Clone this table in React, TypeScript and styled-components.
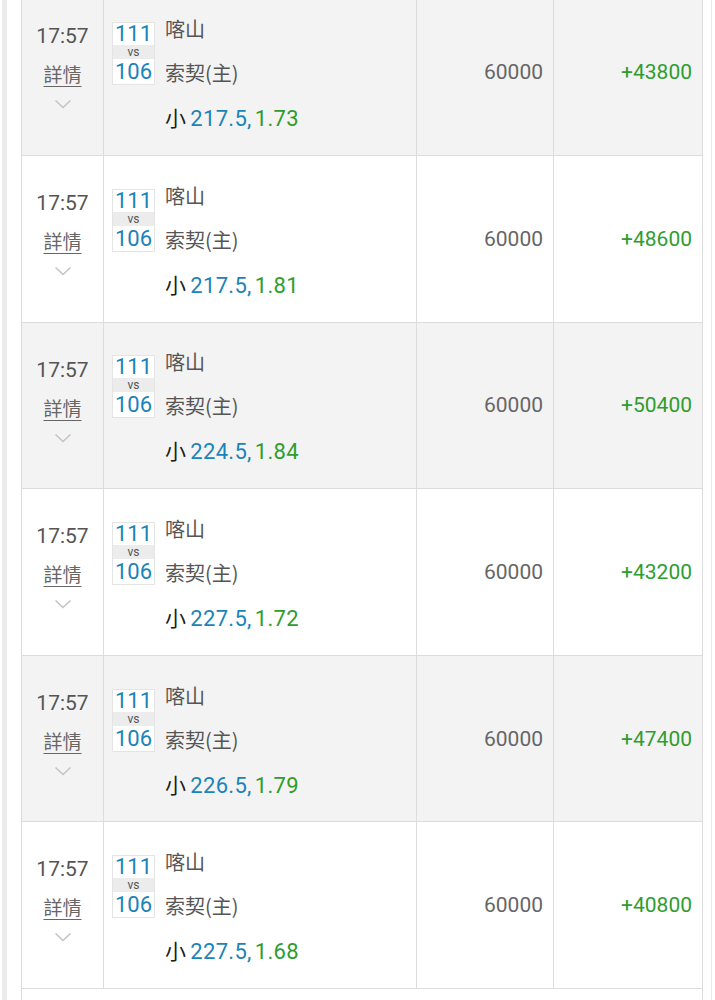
import React from "react"
import styled, { createGlobalStyle } from "styled-components"

type Bet = {
  time: string
  home: string
  away: string
  homeScore: number
  awayScore: number
  line: string
  odds: string
  stake: number
  win: number
}

const bets: Bet[] = [
  { time: "17:57", home: "喀山", away: "索契(主)", homeScore: 111, awayScore: 106, line: "217.5", odds: "1.73", stake: 60000, win: 43800 },
  { time: "17:57", home: "喀山", away: "索契(主)", homeScore: 111, awayScore: 106, line: "217.5", odds: "1.81", stake: 60000, win: 48600 },
  { time: "17:57", home: "喀山", away: "索契(主)", homeScore: 111, awayScore: 106, line: "224.5", odds: "1.84", stake: 60000, win: 50400 },
  { time: "17:57", home: "喀山", away: "索契(主)", homeScore: 111, awayScore: 106, line: "227.5", odds: "1.72", stake: 60000, win: 43200 },
  { time: "17:57", home: "喀山", away: "索契(主)", homeScore: 111, awayScore: 106, line: "226.5", odds: "1.79", stake: 60000, win: 47400 },
  { time: "17:57", home: "喀山", away: "索契(主)", homeScore: 111, awayScore: 106, line: "227.5", odds: "1.68", stake: 60000, win: 40800 },
]

const Chevron = () => (
  <svg width="18" height="10" viewBox="0 0 18 10" fill="none">
    <polyline points="1.5,1.5 9,8.5 16.5,1.5" stroke="#c4c4c4" strokeWidth="1.6" />
  </svg>
)

const App = () => {
  return (
    <>
      <GlobalStyle />
      <Frame>
        <Table>
          {bets.map((bet, i) => (
            <Row key={i} $shaded={i % 2 === 0}>
              <TimeCell>
                <Time>{bet.time}</Time>
                <Detail>詳情</Detail>
                <ChevronWrap>
                  <Chevron />
                </ChevronWrap>
              </TimeCell>
              <MatchCell>
                <MatchInner>
                  <ScoreBox>
                    <Score>{bet.homeScore}</Score>
                    <Vs>vs</Vs>
                    <Score $bottom>{bet.awayScore}</Score>
                  </ScoreBox>
                  <Names>
                    <Team>{bet.home}</Team>
                    <Team>{bet.away}</Team>
                    <Pick>
                      <Side>小</Side>
                      <Line>{bet.line},</Line>
                      <Odds>{bet.odds}</Odds>
                    </Pick>
                  </Names>
                </MatchInner>
              </MatchCell>
              <AmountCell>{bet.stake}</AmountCell>
              <WinCell>+{bet.win}</WinCell>
            </Row>
          ))}
          <Footer />
        </Table>
      </Frame>
    </>
  )
}

const GlobalStyle = createGlobalStyle`
  html, body {
    margin: 0;
    padding: 0;
    overflow: hidden;
    background: #fff;
  }
  body {
    font-family: Roboto, "Noto Sans CJK TC", sans-serif;
  }
`

const Frame = styled.div`
  margin: 0 3px 0 2px;
  min-height: 100vh;
  border-left: 5px solid #ececec;
  border-right: 1px solid #e8e8e8;
  padding: 0 8px 0 14px;
  box-sizing: border-box;
`

const Table = styled.div`
  margin-top: -10.6px;
  border-left: 1px solid #dcdcdc;
  border-right: 1px solid #dcdcdc;
`

const Row = styled.div<{ $shaded: boolean }>`
  display: grid;
  grid-template-columns: 82px 313px 137px 1fr;
  height: 166.6px;
  box-sizing: border-box;
  border-bottom: 1px solid #dcdcdc;
  background: ${(p) => (p.$shaded ? "#f3f3f3" : "#ffffff")};
`

const Cell = styled.div`
  border-right: 1px solid #dcdcdc;
  box-sizing: border-box;
  &:last-child {
    border-right: none;
  }
`

const TimeCell = styled(Cell)`
  display: flex;
  flex-direction: column;
  align-items: center;
  padding-top: 28px;
`

const Time = styled.div`
  font-size: 21px;
  line-height: 38px;
  color: #555;
`

const Detail = styled.div`
  font-family: "Noto Sans CJK TC", sans-serif;
  font-size: 19px;
  line-height: 38px;
  color: #666;
  text-decoration: underline;
  text-underline-offset: 4px;
`

const ChevronWrap = styled.div`
  display: flex;
  margin-top: 6px;
`

const MatchCell = styled(Cell)`
  display: flex;
  align-items: center;
  padding-left: 8px;
`

const MatchInner = styled.div`
  display: flex;
  align-items: flex-start;
  gap: 10px;
  margin-top: 4px;
`

const ScoreBox = styled.div`
  margin-top: 15px;
  width: 41px;
  border: 1px solid #e4e4e4;
  background: #fff;
  display: flex;
  flex-direction: column;
  align-items: center;
`

const Score = styled.div<{ $bottom?: boolean }>`
  font-size: 22px;
  line-height: ${(p) => (p.$bottom ? "25px" : "22px")};
  height: ${(p) => (p.$bottom ? "25px" : "22px")};
  color: #1b83b8;
`

const Vs = styled.div`
  align-self: stretch;
  text-align: center;
  background: #ececec;
  font-size: 12px;
  line-height: 14px;
  height: 14px;
  color: #555;
`

const Names = styled.div`
  display: flex;
  flex-direction: column;
`

const Team = styled.div`
  font-family: "Noto Sans CJK TC", sans-serif;
  font-size: 20px;
  line-height: 44px;
  color: #555;
`

const Pick = styled.div`
  font-size: 22px;
  line-height: 44px;
  letter-spacing: 0.3px;
  display: flex;
  align-items: baseline;
`

const Side = styled.span`
  font-family: "Noto Sans CJK TC", sans-serif;
  font-size: 21px;
  color: #1c1c1c;
  margin-right: 4px;
`

const Line = styled.span`
  color: #1b83b8;
  margin-right: 3px;
`

const Odds = styled.span`
  color: #2e9d2e;
`

const AmountCell = styled(Cell)`
  display: flex;
  align-items: center;
  justify-content: flex-end;
  padding-right: 10px;
  font-size: 21px;
  color: #666;
`

const WinCell = styled(Cell)`
  display: flex;
  align-items: center;
  justify-content: flex-end;
  padding-right: 10px;
  font-size: 21px;
  color: #2e9d2e;
`

const Footer = styled.div`
  height: 40px;
  background: #fff;
`

export default App
